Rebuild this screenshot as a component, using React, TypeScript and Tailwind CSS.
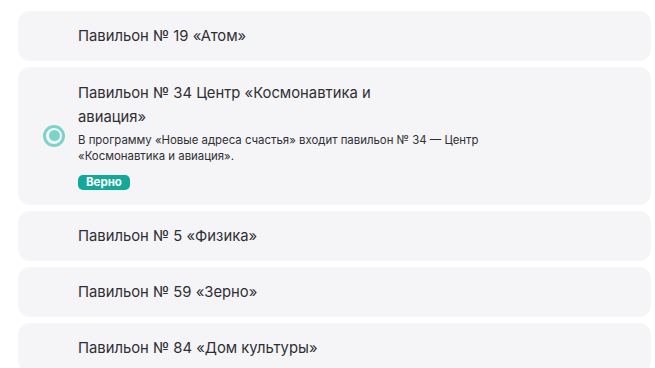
import React from 'react';

type Option = {
  id: number;
  title: string;
  selected?: boolean;
  note?: string;
};

const options: Option[] = [
  { id: 1, title: 'Павильон № 19 «Атом»' },
  {
    id: 2,
    title: 'Павильон № 34 Центр «Космонавтика и авиация»',
    selected: true,
    note: 'В программу «Новые адреса счастья» входит павильон № 34 — Центр «Космонавтика и авиация».',
  },
  { id: 3, title: 'Павильон № 5 «Физика»' },
  { id: 4, title: 'Павильон № 59 «Зерно»' },
  { id: 5, title: 'Павильон № 84 «Дом культуры»' },
];

const Radio = () => (
  <div className="w-[22px] h-[22px] shrink-0 rounded-full border-[3px] border-[#7dd3ca] flex items-center justify-center">
    <div className="w-[11px] h-[11px] rounded-full bg-[#7dd3ca]" />
  </div>
);

export default function App() {
  return (
    <div
      className="w-[655px] h-[368px] overflow-hidden bg-white pt-[11px] pl-[18px] pr-[4px] flex flex-col gap-[6px] text-[#2f2f33]"
      style={{ fontFamily: 'Inter, "Noto Sans", sans-serif' }}
    >
      {options.map((o) =>
        o.selected ? (
          <div key={o.id} className="shrink-0 bg-[#f5f5f7] rounded-xl pl-[25px] pr-4 pt-[14px] pb-[15px] flex items-center gap-[13px]">
            <Radio />
            <div className="flex flex-col">
              <div className="w-[310px] text-[14.8px] leading-[24px]">{o.title}</div>
              <div className="w-[420px] mt-[3px] text-[11.4px] leading-[16px]">{o.note}</div>
              <div className="mt-[11px] self-start h-[15px] px-[8px] rounded-[5px] bg-[#14a89a] text-white text-[11.5px] font-bold leading-[15px]">
                Верно
              </div>
            </div>
          </div>
        ) : (
          <div key={o.id} className="shrink-0 h-[50px] bg-[#f5f5f7] rounded-xl pl-[60px] flex items-center text-[14.8px]">
            {o.title}
          </div>
        )
      )}
    </div>
  );
}
